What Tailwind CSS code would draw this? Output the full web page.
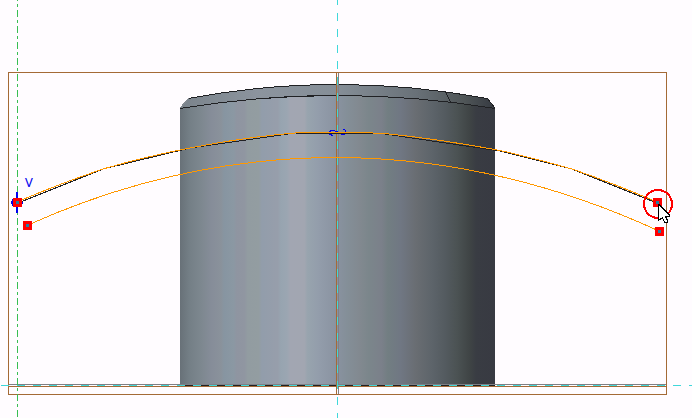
<!DOCTYPE html>
<html lang="en">
<head>
<meta charset="utf-8">
<meta name="viewport" content="width=device-width, initial-scale=1">
<title>Sketch view</title>
<script src="https://cdn.jsdelivr.net/npm/@tailwindcss/browser@4"></script>
</head>
<body class="bg-[#fffcff]">
<main class="w-full overflow-hidden">
<svg class="block h-auto w-full" viewBox="0 0 692 418" role="img" aria-label="Cylinder sketch with spline curves" shape-rendering="crispEdges" fill="none">
  <defs>
    <linearGradient id="body" gradientUnits="userSpaceOnUse" x1="180" y1="0" x2="495" y2="0">
      <stop offset="0" stop-color="#687178"/>
      <stop offset=".03" stop-color="#747f86"/>
      <stop offset=".07" stop-color="#7e8890"/>
      <stop offset=".1" stop-color="#868d99"/>
      <stop offset=".13" stop-color="#8a929b"/>
      <stop offset=".14" stop-color="#8795a1"/>
      <stop offset=".17" stop-color="#8b98a3"/>
      <stop offset=".18" stop-color="#8f95a1"/>
      <stop offset=".205" stop-color="#9096a1"/>
      <stop offset=".215" stop-color="#929ca1"/>
      <stop offset=".25" stop-color="#939da1"/>
      <stop offset=".26" stop-color="#929dab"/>
      <stop offset=".31" stop-color="#979eab"/>
      <stop offset=".32" stop-color="#97a4b0"/>
      <stop offset=".34" stop-color="#9ba6b2"/>
      <stop offset=".35" stop-color="#a2a6b2"/>
      <stop offset=".395" stop-color="#a2a6b1"/>
      <stop offset=".405" stop-color="#98a4ae"/>
      <stop offset=".44" stop-color="#939dab"/>
      <stop offset=".5" stop-color="#8992a0"/>
      <stop offset=".53" stop-color="#848f98"/>
      <stop offset=".57" stop-color="#828990"/>
      <stop offset=".6" stop-color="#7b868b"/>
      <stop offset=".64" stop-color="#7b808a"/>
      <stop offset=".66" stop-color="#727e82"/>
      <stop offset=".7" stop-color="#707783"/>
      <stop offset=".75" stop-color="#696d72"/>
      <stop offset=".8" stop-color="#5d646a"/>
      <stop offset=".84" stop-color="#545b60"/>
      <stop offset=".88" stop-color="#4b5253"/>
      <stop offset=".92" stop-color="#3f4445"/>
      <stop offset=".94" stop-color="#393c43"/>
      <stop offset="1" stop-color="#383a42"/>
    </linearGradient>
    <linearGradient id="cap" gradientUnits="userSpaceOnUse" x1="180" y1="0" x2="495" y2="0">
      <stop offset="0" stop-color="#7a838b"/>
      <stop offset=".25" stop-color="#8c949e"/>
      <stop offset=".5" stop-color="#858e97"/>
      <stop offset=".75" stop-color="#697178"/>
      <stop offset=".9" stop-color="#505658"/>
      <stop offset="1" stop-color="#353941"/>
    </linearGradient>
  </defs>

  <!-- solid body -->
  <path fill="url(#body)" d="M180 108Q337 83 495 108V385H180Z"/>
  <path fill="url(#cap)" d="M180 108L189 98Q337 71 487 98L495 108Q337 83 180 108Z"/>
  <g stroke="#202124">
    <path d="M188 98.500Q337 70.500 487 98.500"/>
    <path d="M180 108.500Q337 82.500 495 108.500"/>
    <path d="M445.500 92L450.500 102M487 98L495 108M180 385.500H495"/>
  </g>
  <path stroke="#858b92" d="M180 108L189 98"/>

  <!-- datum frame and axes -->
  <path stroke="#808085" d="M8 384.500H666M338.500 73V394"/>
  <path stroke="#a46a36" d="M8.500 72.500H666.500V394.500H8.500ZM8 386.500H666M336.500 72V394"/>
  <path stroke="#40d8da" stroke-dasharray="8 8" d="M1 385.500H692M337.500 -3V418"/>
  <path stroke="#38be52" stroke-dasharray="7 3 3 3" d="M17.500 -6V418"/>

  <!-- origin marker and vertical constraint -->
  <path fill="#0000ee" d="M16 192h2v21h-2zM12 199h10v7h-10zM11 201h12v3h-12z"/>
  <path fill="#0000ee" d="M330 130h5v1h-5zM329 131h2v2h-2zM335 131h3v1h-3zM329 134h3v1h-3zM331 135h2v1h-2zM343 129h2v1h-2zM345 130h1v3h-1zM341 134h4v1h-4zM344 133h1v1h-1z"/>

  <!-- splines -->
  <path stroke="#202124" d="M18 203L103 169L190 148L295 133L385 134L500 151L572 169L657 203"/>
  <path stroke="#202124" d="M305 133.500H368"/>
  <path stroke="#ff9800" d="M17 202Q60 183.500 103 169Q146 156.500 190 148Q242 137.500 295 133Q340 131 385 133.500Q442 139.500 500 150.500Q536 158.500 572 169Q614 183.500 657 202"/>
  <path stroke="#ff9800" d="M28 225Q178 157.500 337 157.500Q500 158 659 231"/>
  <g fill="#ff0000">
    <path d="M13 198h9v9h-9zM23 221h9v9h-9zM653 198h9v9h-9zM655 227h9v9h-9z"/>
  </g>
  <g fill="#217fa5">
    <path d="M16 201h3v3h-3zM26 224h3v3h-3zM656 201h3v3h-3zM658 230h3v3h-3z"/>
  </g>

  <!-- selected endpoint and pointer -->
  <circle cx="658" cy="204" r="14" stroke="#ff0000" stroke-width="2"/>
  <path fill="#fff" stroke="#000" d="M658.500 204.500V220.500L662.500 217.500L664.500 222.500H667.500V220.500L665.500 216.500H669.500V215.500Z"/>
  <path stroke="#000" d="M659.500 204.500L670 215"/>
  <text x="25" y="187" fill="#0000ee" font-family="Noto Sans, sans-serif" font-size="13">V</text>
</svg>
</main>
</body>
</html>
